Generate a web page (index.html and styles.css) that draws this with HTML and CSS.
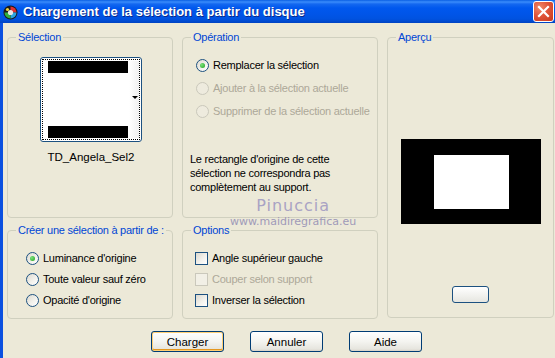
FILE: index.html
```html
<!DOCTYPE html>
<html lang="fr">
<head>
<meta charset="utf-8">
<title>Chargement de la sélection</title>
<link rel="stylesheet" href="styles.css">
</head>
<body>
<div class="window">
  <div class="titlebar">
    <svg class="app-icon" width="15" height="15" viewBox="0 0 15 15">
      <circle cx="7.5" cy="7.5" r="7" fill="#1a1a1a"/>
      <path d="M7.5 1.5 A6 6 0 0 1 13.5 7.5 L7.5 7.5Z" fill="#e03030"/>
      <path d="M13.5 7.5 A6 6 0 0 1 7.5 13.5 L7.5 7.5Z" fill="#2aa5e0"/>
      <path d="M7.5 13.5 A6 6 0 0 1 1.5 7.5 L7.5 7.5Z" fill="#30b040"/>
      <circle cx="7.5" cy="7.5" r="2.6" fill="#e8e8e8"/>
      <circle cx="4.5" cy="4.5" r="1.6" fill="#f0d040"/>
    </svg>
    <span class="title">Chargement de la sélection à partir du disque</span>
    <div class="close">
      <svg width="13" height="13" viewBox="0 0 13 13"><path d="M2 2 L11 11 M11 2 L2 11" stroke="#fff" stroke-width="2.2" stroke-linecap="square"/></svg>
    </div>
  </div>
  <div class="content">
    <div class="groups">
      <div class="group g-sel">
        <span class="legend">Sélection</span>
        <div class="thumb">
          <div class="thumb-inner">
            <div class="thumb-img">
              <div class="bar"></div>
              <div class="bar"></div>
            </div>
            <div class="thumb-side"><span class="arrow"></span></div>
          </div>
        </div>
        <div class="thumb-name">TD_Angela_Sel2</div>
      </div>
      <div class="group g-op">
        <span class="legend">Opération</span>
        <div class="rows rows-op">
          <div class="row"><span class="radio checked"></span>Remplacer la sélection</div>
          <div class="row disabled"><span class="radio"></span>Ajouter à la sélection actuelle</div>
          <div class="row disabled"><span class="radio"></span>Supprimer de la sélection actuelle</div>
        </div>
        <p class="note">Le rectangle d'origine de cette sélection ne correspondra pas complètement au support.</p>
      </div>
      <div class="group g-prev">
        <span class="legend">Aperçu</span>
        <div class="preview"><div class="preview-white"></div></div>
        <div class="mini-btn"></div>
      </div>
      <div class="group g-create">
        <span class="legend">Créer une sélection à partir de :</span>
        <div class="rows rows-small">
          <div class="row"><span class="radio checked"></span>Luminance d'origine</div>
          <div class="row"><span class="radio"></span>Toute valeur sauf zéro</div>
          <div class="row"><span class="radio"></span>Opacité d'origine</div>
        </div>
      </div>
      <div class="group g-opt">
        <span class="legend">Options</span>
        <div class="rows rows-small">
          <div class="row"><span class="check"></span>Angle supérieur gauche</div>
          <div class="row disabled"><span class="check"></span>Couper selon support</div>
          <div class="row"><span class="check"></span>Inverser la sélection</div>
        </div>
      </div>
    </div>
    <div class="buttons">
      <button class="btn default">Charger</button>
      <button class="btn">Annuler</button>
      <button class="btn">Aide</button>
    </div>
    <div class="watermark">
      <span class="wm-name">Pinuccia</span>
      <span class="wm-url">www.maidiregrafica.eu</span>
    </div>
  </div>
</div>
</body>
</html>
```
FILE: styles.css
```css
* { box-sizing: border-box; }
html, body { margin: 0; padding: 0; }
body {
  width: 555px;
  height: 358px;
  overflow: hidden;
  background: #ECE9D8;
  font-family: "Liberation Sans", Arial, sans-serif;
  font-size: 11px;
  letter-spacing: -0.25px;
  color: #000;
}
.window {
  width: 555px;
  height: 358px;
  display: flex;
  flex-direction: column;
}
.titlebar {
  height: 23px;
  flex: none;
  display: flex;
  align-items: center;
  padding-left: 3px;
  background: linear-gradient(to bottom, #0A5FE4 0px, #3A8CFB 2px, #1468F0 4px, #0058EE 8px, #0055E8 14px, #0052E0 19px, #0043C2 23px);
}
.app-icon { flex: none; margin-top: 1px; }
.title {
  margin-left: 5px;
  color: #fff;
  font-family: "Liberation Sans", Arial, sans-serif;
  font-weight: bold;
  font-size: 13px;
  letter-spacing: 0;
  text-shadow: 1px 1px 0 #0A2A8A;
  white-space: nowrap;
  flex: 1;
}
.close {
  width: 21px;
  height: 21px;
  margin-right: 1px;
  border: 1px solid #fff;
  border-radius: 3px;
  background: radial-gradient(circle at 30% 30%, #F08A6A 0%, #E0553A 45%, #C8381C 100%);
  display: flex;
  align-items: center;
  justify-content: center;
}
.content {
  flex: 1;
  position: relative;
  border-left: 3px solid #0B50E0;
  padding: 14px 0 0 4px;
}
.groups {
  display: grid;
  grid-template-columns: 166px 196px 167px;
  grid-template-rows: 181px 89px;
  column-gap: 9px;
  row-gap: 12px;
}
.group {
  position: relative;
  border: 1px solid #D0D0BF;
  border-radius: 4px;
}
.legend {
  position: absolute;
  top: -7px;
  left: 8px;
  padding: 0 2px;
  line-height: 13px;
  color: #0046D5;
  background: #ECE9D8;
  white-space: nowrap;
}
.g-prev { grid-column: 3; grid-row: 1 / span 2; height: 281px; display: flex; flex-direction: column; align-items: center; }
.g-sel { grid-column: 1; grid-row: 1; display: flex; flex-direction: column; align-items: center; padding-top: 19px; }
.g-op { grid-column: 2; grid-row: 1; padding: 21px 0 0 13px; }
.g-create { grid-column: 1; grid-row: 2; padding: 21px 0 0 18px; }
.g-opt { grid-column: 2; grid-row: 2; padding: 21px 0 0 12px; }

/* thumbnail */
.thumb {
  width: 102px;
  height: 85px;
  margin-left: 2px;
  border: 1px solid #1C5180;
  border-radius: 3px;
  background: #fff;
  padding: 1px;
}
.thumb-inner {
  height: 100%;
  border: 1px dotted #000;
  display: flex;
  padding: 1px 0 1px 5px;
}
.thumb-img {
  width: 80px;
  display: flex;
  flex-direction: column;
  justify-content: space-between;
  background: #fff;
}
.bar { height: 12px; background: #000; }
.thumb-side {
  flex: 1;
  position: relative;
  margin-left: 1px;
  background: linear-gradient(to right, #fff, #f0f0f0);
}
.arrow {
  position: absolute;
  right: 1px;
  top: 35px;
  width: 0; height: 0;
  border-left: 3px solid transparent;
  border-right: 3px solid transparent;
  border-top: 3px solid #000;
}
.thumb-name {
  margin-top: 8px;
  margin-left: 2px;
  font-size: 11.5px;
  letter-spacing: 0;
  line-height: 14px;
}

/* rows */
.rows { display: flex; flex-direction: column; }
.rows-op { gap: 10px; }
.rows-small { gap: 8px; }
.row {
  display: flex;
  align-items: center;
  line-height: 13px;
  white-space: nowrap;
}
.row.disabled { color: #ACA899; }
.radio {
  width: 13px;
  height: 13px;
  flex: none;
  margin-right: 4px;
  border: 1px solid #1C5180;
  border-radius: 50%;
  background: linear-gradient(135deg, #DCD9CF 0%, #F4F3EE 60%, #fff 100%);
  display: flex;
  align-items: center;
  justify-content: center;
}
.radio.checked::after {
  content: "";
  width: 5px;
  height: 5px;
  border-radius: 50%;
  background: radial-gradient(circle at 35% 35%, #7BE27B, #21A121);
}
.row.disabled .radio { border-color: #CAC8BB; background: #EEEBDE; }
.check {
  width: 13px;
  height: 13px;
  flex: none;
  margin-right: 4px;
  border: 1px solid #1C5180;
  background: linear-gradient(135deg, #DCD9CF 0%, #F4F3EE 60%, #fff 100%);
}
.row.disabled .check { border-color: #CAC8BB; background: #F2F0E6; }

.note {
  margin: 34px 0 0 -6px;
  line-height: 14px;
  width: 180px;
}

/* preview */
.preview {
  margin-top: 101px;
  width: 140px;
  height: 85px;
  background: #000;
  padding: 16px 0 0 33px;
}
.preview-white { width: 75px; height: 54px; background: #fff; }
.mini-btn {
  margin-top: 62px;
  width: 37px;
  height: 17px;
  border: 1px solid #1C5180;
  border-radius: 3px;
  background: linear-gradient(to bottom, #fff, #E6E6E0);
}

/* buttons */
.buttons {
  display: flex;
  gap: 26px;
  padding-left: 144px;
  margin-top: 12px;
}
.btn {
  width: 73px;
  height: 21px;
  padding: 0;
  font-family: "Liberation Sans", Arial, sans-serif;
  font-size: 11.5px;
  letter-spacing: 0;
  color: #000;
  border: 1px solid #003C74;
  border-radius: 3px;
  background: linear-gradient(to bottom, #FFFFFF 0%, #F4F4F0 50%, #E6E5DE 90%, #D6D0C5 100%);
}
.btn.default {
  box-shadow: inset 0 0 0 1px #FFCF74, inset 0 -1px 0 1px #E5971F;
}

/* watermark */
.watermark {
  position: absolute;
  left: 227px;
  top: 176px;
  display: flex;
  flex-direction: column;
  align-items: center;
  gap: 3px;
  pointer-events: none;
  letter-spacing: 0;
}
.wm-name {
  font-family: "DejaVu Sans", sans-serif;
  font-size: 16px;
  line-height: 14px;
  color: #A9A3C4;
  letter-spacing: 1px;
}
.wm-url {
  font-family: "DejaVu Sans", sans-serif;
  font-size: 11px;
  line-height: 11px;
  color: #9F9AB8;
}
```
